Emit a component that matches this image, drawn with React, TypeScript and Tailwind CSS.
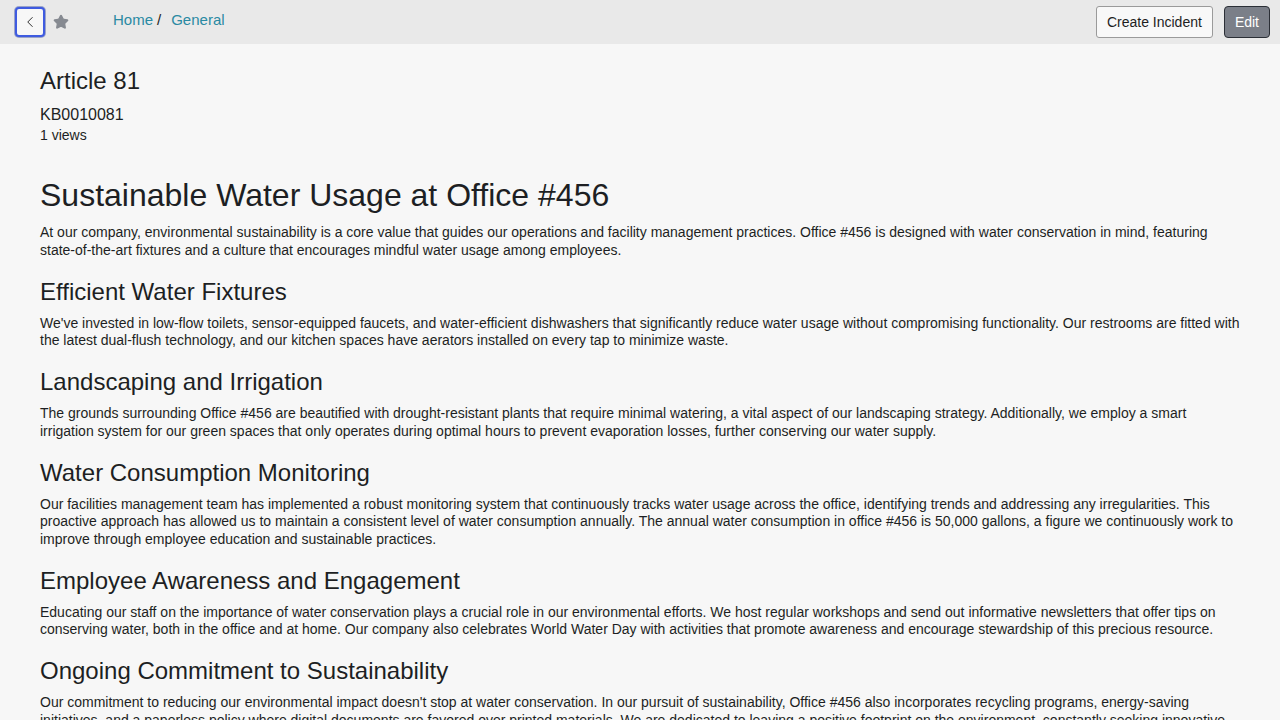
import { ChevronLeft, Star } from "lucide-react";

const sections = [
  {
    title: "Efficient Water Fixtures",
    body: "We've invested in low-flow toilets, sensor-equipped faucets, and water-efficient dishwashers that significantly reduce water usage without compromising functionality. Our restrooms are fitted with the latest dual-flush technology, and our kitchen spaces have aerators installed on every tap to minimize waste.",
  },
  {
    title: "Landscaping and Irrigation",
    body: "The grounds surrounding Office #456 are beautified with drought-resistant plants that require minimal watering, a vital aspect of our landscaping strategy. Additionally, we employ a smart irrigation system for our green spaces that only operates during optimal hours to prevent evaporation losses, further conserving our water supply.",
  },
  {
    title: "Water Consumption Monitoring",
    body: "Our facilities management team has implemented a robust monitoring system that continuously tracks water usage across the office, identifying trends and addressing any irregularities. This proactive approach has allowed us to maintain a consistent level of water consumption annually. The annual water consumption in office #456 is 50,000 gallons, a figure we continuously work to improve through employee education and sustainable practices.",
  },
  {
    title: "Employee Awareness and Engagement",
    body: "Educating our staff on the importance of water conservation plays a crucial role in our environmental efforts. We host regular workshops and send out informative newsletters that offer tips on conserving water, both in the office and at home. Our company also celebrates World Water Day with activities that promote awareness and encourage stewardship of this precious resource.",
  },
  {
    title: "Ongoing Commitment to Sustainability",
    body: "Our commitment to reducing our environmental impact doesn't stop at water conservation. In our pursuit of sustainability, Office #456 also incorporates recycling programs, energy-saving initiatives, and a paperless policy where digital documents are favored over printed materials. We are dedicated to leaving a positive footprint on the environment, constantly seeking innovative ways to improve our practices and inspire our employees to do the same.",
  },
];

function TopBar() {
  return (
    <div className="flex h-[44px] items-center justify-between bg-[#e9e9e9] pl-[15px] pr-[10px]">
      <div className="flex items-center">
        <button className="flex h-[30px] w-[30px] items-center justify-center rounded-[4px] border-2 border-[#3f5be0] bg-[#f7f7f7] text-[#222] shadow-[0_0_0_1px_#9aa3c8]">
          <ChevronLeft size={18} strokeWidth={1.25} />
        </button>
        <Star size={16} className="ml-[8px] fill-[#868a91] text-[#868a91]" />
        <nav className="ml-[44px] -mt-[4px] flex items-center text-[15px] text-[#2a8aa3]">
          <span>Home</span>
          <span className="ml-[4px] text-[#222]">/</span>
          <span className="ml-[10px]">General</span>
        </nav>
      </div>
      <div className="flex items-center gap-[11px]">
        <button className="h-[32px] rounded-[3px] border border-[#9a9a9a] bg-[#f8f8f8] px-[10px] text-[14px] text-[#1e1e1e]">
          Create Incident
        </button>
        <button className="h-[32px] rounded-[4px] border border-[#2b2f36] bg-[#7b7f88] px-[10px] text-[14px] text-white">
          Edit
        </button>
      </div>
    </div>
  );
}

export default function App() {
  return (
    <div
      className="min-h-screen bg-[#f7f7f7] text-[#1d1f23]"
      style={{ fontFamily: '"Liberation Sans", Arial, sans-serif' }}
    >
      <TopBar />
      <main className="px-[40px] pt-[22px]">
        <h1 className="text-[24px] leading-[30px]">Article 81</h1>
        <div className="mt-[9px] text-[16px] leading-[20px]">KB0010081</div>
        <div className="mt-[1px] text-[14px] leading-[18px]">1 views</div>
        <h2 className="mt-[31px] text-[32px] leading-[40px]">Sustainable Water Usage at Office #456</h2>
        <p className="mt-[9px] text-[14px] leading-[17.5px]">
          At our company, environmental sustainability is a core value that guides our operations and facility management practices. Office #456 is designed with water conservation in mind, featuring state-of-the-art fixtures and a culture that encourages mindful water usage among employees.
        </p>
        {sections.map((s) => (
          <section key={s.title}>
            <h3 className="mt-[17.5px] text-[24px] leading-[30px]">{s.title}</h3>
            <p className="mt-[8px] text-[14px] leading-[17.5px]">{s.body}</p>
          </section>
        ))}
      </main>
    </div>
  );
}
